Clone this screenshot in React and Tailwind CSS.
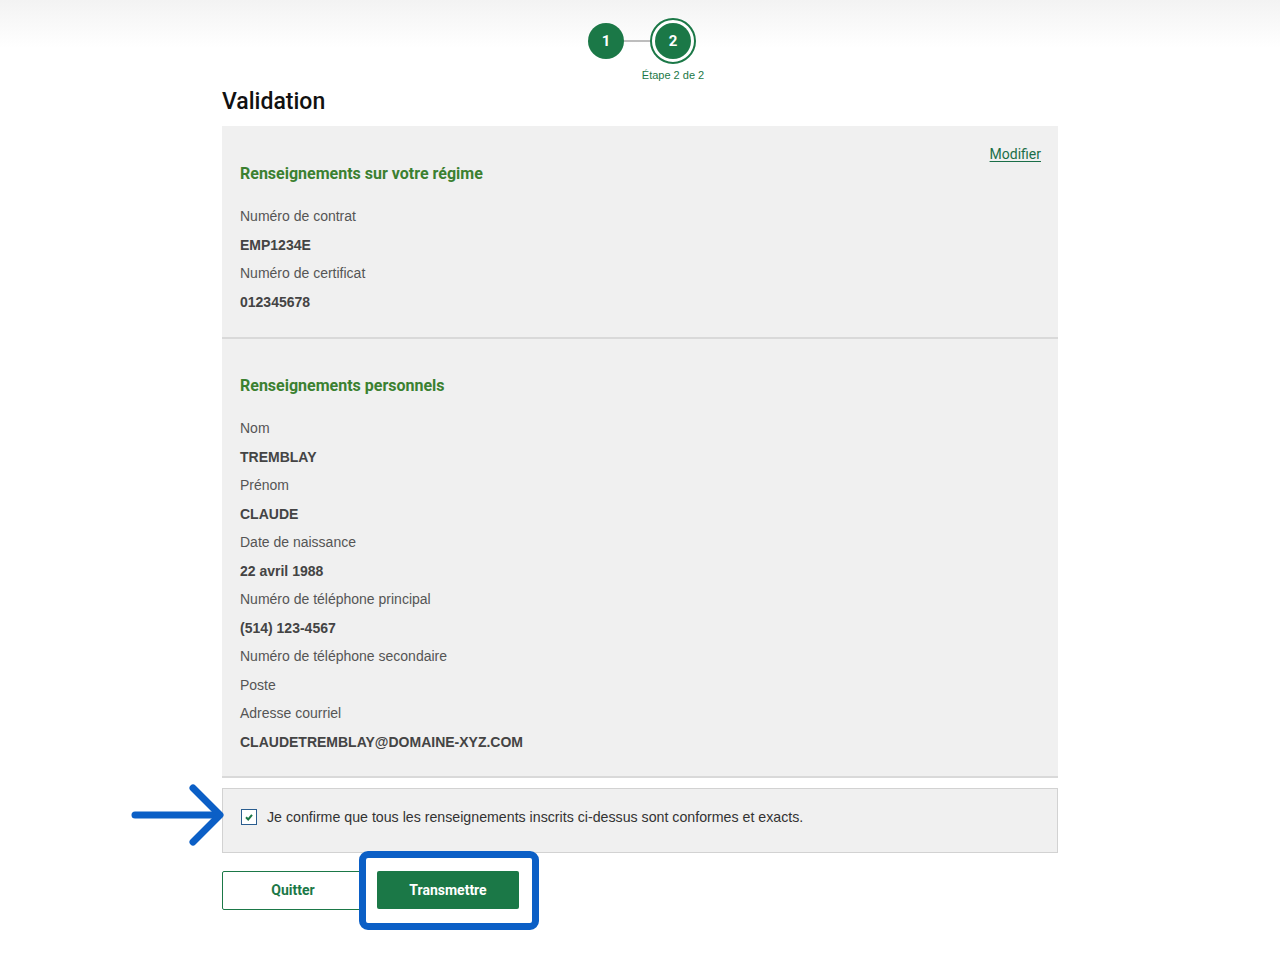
import React from "react";

const regime = [
	{ label: "Numéro de contrat", value: "EMP1234E" },
	{ label: "Numéro de certificat", value: "012345678" }
];

const personnel = [
	{ label: "Nom", value: "TREMBLAY" },
	{ label: "Prénom", value: "CLAUDE" },
	{ label: "Date de naissance", value: "22 avril 1988" },
	{ label: "Numéro de téléphone principal", value: "(514) 123-4567" },
	{ label: "Numéro de téléphone secondaire" },
	{ label: "Poste" },
	{ label: "Adresse courriel", value: "CLAUDETREMBLAY@DOMAINE-XYZ.COM" }
];

function Rows({ items }) {
	return (
		<div className="mt-[16px] flex flex-col">
			{items.map((item) => (
				<React.Fragment key={item.label}>
					<p className="h-[28.5px] leading-[28.5px] text-[14px] text-[#555]">{item.label}</p>
					{item.value && (
						<p className="h-[28.5px] leading-[28.5px] text-[14px] font-bold text-[#444]">
							{item.value}
						</p>
					)}
				</React.Fragment>
			))}
		</div>
	);
}

function Stepper() {
	return (
		<div className="flex justify-center pt-[18px]">
			<div className="ml-[4px] flex items-center">
				<div className="flex h-[36px] w-[36px] items-center justify-center rounded-full bg-[#1b7847] font-['Roboto'] text-[15px] font-bold text-white">
					1
				</div>
				<div className="h-[2px] w-[26px] bg-[#bdbdbd]" />
				<div className="relative flex h-[46px] w-[46px] items-center justify-center rounded-full border-[2px] border-[#1b7847] bg-white">
					<div className="flex h-[36px] w-[36px] items-center justify-center rounded-full bg-[#1b7847] font-['Roboto'] text-[15px] font-bold text-white">
						2
					</div>
					<p className="absolute left-1/2 top-full mt-[6px] -translate-x-1/2 whitespace-nowrap text-[11px] leading-[14px] text-[#1b7847]">
						Étape 2 de 2
					</p>
				</div>
			</div>
		</div>
	);
}

export default function App() {
	return (
		<div className="min-h-[960px] bg-[linear-gradient(to_bottom,#f3f3f3,#ffffff_48px)] font-['Liberation_Sans',Arial,sans-serif]">
			<Stepper />
			<div className="mx-auto w-[836px]">
				<h1 className="mt-[24px] font-['Roboto'] text-[23px] font-medium leading-[28px] text-[#111]">Validation</h1>

				<div className="mt-[10px] bg-[#f0f0f0]">
					{/* regime */}
					<div className="relative border-b-2 border-[#d9d9d9] px-[18px] pb-[21px] pt-[36px]">
						<a
							href="#"
							className="absolute right-[17px] top-[18px] font-['Roboto'] text-[14px] text-[#1a6e48] underline underline-offset-2"
						>
							Modifier
						</a>
						<h2 className="font-['Roboto'] text-[16px] font-bold leading-[24px] text-[#3b8030]">
							Renseignements sur votre régime
						</h2>
						<Rows items={regime} />
					</div>
					{/* personnel */}
					<div className="border-b-2 border-[#d9d9d9] px-[18px] pb-[20px] pt-[35px]">
						<h2 className="font-['Roboto'] text-[16px] font-bold leading-[24px] text-[#3b8030]">
							Renseignements personnels
						</h2>
						<Rows items={personnel} />
					</div>
				</div>

				<div className="relative mt-[10px] h-[65px] border border-[#d2d2d2] bg-[#f0f0f0] px-[18px] pt-[18px]">
					<svg
						className="absolute left-[-92px] top-[-5px]"
						width="96"
						height="62"
						viewBox="0 0 96 62"
						fill="none"
						stroke="#0b5fc6"
						strokeWidth="7"
						strokeLinecap="round"
						strokeLinejoin="round"
					>
						<path d="M4 31 H88" />
						<path d="M62 4 L89 31 L62 58" />
					</svg>
					<label className="flex h-[20px] items-center gap-[10px]">
						<span className="flex h-[16px] w-[16px] items-center justify-center border border-[#2a5d8f] bg-white">
							<svg width="10" height="10" viewBox="0 0 10 10" fill="none" stroke="#1b7847" strokeWidth="2">
								<path d="M2 5.2 L4.2 7.4 L8 2.8" />
							</svg>
						</span>
						<span className="text-[14.2px] leading-[20px] text-[#333]">
							Je confirme que tous les renseignements inscrits ci-dessus sont conformes et exacts.
						</span>
					</label>
				</div>

				<div className="mt-[18px] flex gap-[13px] font-['Roboto']">
					<button className="h-[39px] w-[142px] rounded-[2px] border border-[#1b7847] bg-white text-[14px] font-bold text-[#1b7847]">
						Quitter
					</button>
					<div className="relative">
						<div className="absolute bottom-[-20px] left-[-18px] right-[-20px] top-[-20px] rounded-[9px] border-[7px] border-[#0b5fc6] bg-white" />
						<button className="relative h-[38px] w-[142px] rounded-[2px] bg-[#1b7847] text-[14px] font-bold text-white">
							Transmettre
						</button>
					</div>
				</div>
			</div>
		</div>
	);
}
